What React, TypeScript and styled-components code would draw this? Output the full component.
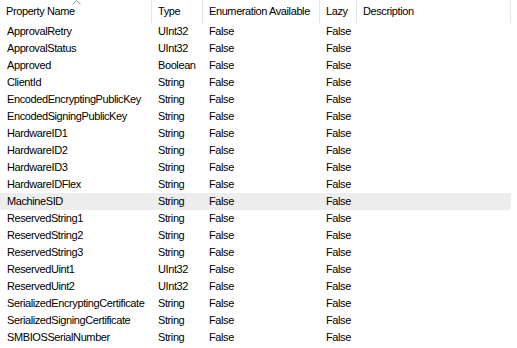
import React from 'react'
import styled, { createGlobalStyle } from 'styled-components'

interface Property {
  name: string
  type: string
  enumeration: string
  lazy: string
  description?: string
}

const GlobalStyle = createGlobalStyle`
  html, body {
    margin: 0;
    padding: 0;
    background: #ffffff;
  }
  body {
    font-family: "Liberation Sans", Arial, sans-serif;
    font-size: 11px;
    letter-spacing: -0.4px;
    color: #000000;
  }
`

const COLUMNS = '152px 51px 117px 37px 154px'

const List = styled.div`
  width: 511px;
  height: 348px;
  overflow: hidden;
  background: #ffffff;
`

const HeaderRow = styled.div`
  display: grid;
  grid-template-columns: ${COLUMNS};
  height: 23px;
`

const HeaderCell = styled.div`
  position: relative;
  display: flex;
  align-items: center;
  padding: 0 0 1px 6px;
  border-right: 1px solid #e5e5e5;
  white-space: nowrap;
  overflow: hidden;
`

const SortArrow = styled.svg`
  position: absolute;
  top: 0;
  left: 50%;
  margin-left: -4px;
  width: 9px;
  height: 5px;
`

const Row = styled.div<{ $selected?: boolean }>`
  display: grid;
  grid-template-columns: ${COLUMNS};
  height: 17px;
  align-items: center;
  background: ${(p) => (p.$selected ? '#ededed' : 'transparent')};
`

const Cell = styled.div<{ $first?: boolean }>`
  padding-left: ${(p) => (p.$first ? '7px' : '6px')};
  white-space: nowrap;
  overflow: hidden;
  line-height: 17px;
`

const properties: Property[] = [
  { name: 'ApprovalRetry', type: 'UInt32', enumeration: 'False', lazy: 'False' },
  { name: 'ApprovalStatus', type: 'UInt32', enumeration: 'False', lazy: 'False' },
  { name: 'Approved', type: 'Boolean', enumeration: 'False', lazy: 'False' },
  { name: 'ClientId', type: 'String', enumeration: 'False', lazy: 'False' },
  { name: 'EncodedEncryptingPublicKey', type: 'String', enumeration: 'False', lazy: 'False' },
  { name: 'EncodedSigningPublicKey', type: 'String', enumeration: 'False', lazy: 'False' },
  { name: 'HardwareID1', type: 'String', enumeration: 'False', lazy: 'False' },
  { name: 'HardwareID2', type: 'String', enumeration: 'False', lazy: 'False' },
  { name: 'HardwareID3', type: 'String', enumeration: 'False', lazy: 'False' },
  { name: 'HardwareIDFlex', type: 'String', enumeration: 'False', lazy: 'False' },
  { name: 'MachineSID', type: 'String', enumeration: 'False', lazy: 'False' },
  { name: 'ReservedString1', type: 'String', enumeration: 'False', lazy: 'False' },
  { name: 'ReservedString2', type: 'String', enumeration: 'False', lazy: 'False' },
  { name: 'ReservedString3', type: 'String', enumeration: 'False', lazy: 'False' },
  { name: 'ReservedUint1', type: 'UInt32', enumeration: 'False', lazy: 'False' },
  { name: 'ReservedUint2', type: 'UInt32', enumeration: 'False', lazy: 'False' },
  { name: 'SerializedEncryptingCertificate', type: 'String', enumeration: 'False', lazy: 'False' },
  { name: 'SerializedSigningCertificate', type: 'String', enumeration: 'False', lazy: 'False' },
  { name: 'SMBIOSSerialNumber', type: 'String', enumeration: 'False', lazy: 'False' },
]

const App: React.FC = () => {
  return (
    <>
      <GlobalStyle />
      <List>
        <HeaderRow>
          <HeaderCell>
            <SortArrow viewBox="0 0 9 5">
              <path d="M0.5 4.5 L4.5 0.5 L8.5 4.5" fill="none" stroke="#9a9a9a" strokeWidth="1" />
            </SortArrow>
            Property Name
          </HeaderCell>
          <HeaderCell>Type</HeaderCell>
          <HeaderCell>Enumeration Available</HeaderCell>
          <HeaderCell>Lazy</HeaderCell>
          <HeaderCell>Description</HeaderCell>
        </HeaderRow>

        {properties.map((p) => (
          <Row key={p.name} $selected={p.name === 'MachineSID'}>
            <Cell $first>{p.name}</Cell>
            <Cell>{p.type}</Cell>
            <Cell>{p.enumeration}</Cell>
            <Cell>{p.lazy}</Cell>
            <Cell>{p.description}</Cell>
          </Row>
        ))}
      </List>
    </>
  )
}

export default App
